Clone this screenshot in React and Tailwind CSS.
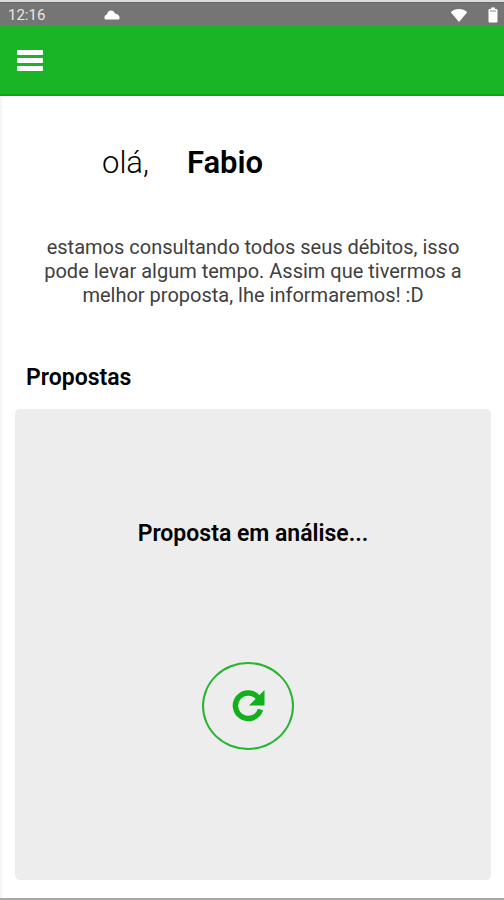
import { useState } from 'react'

function CloudIcon() {
    return (
        <svg width="16" height="10" viewBox="0 0 16 10" fill="#fff" aria-hidden="true">
            <path d="M1.500 9.500Q.4 9.300 .4 8C.4 6.300 1.200 5 2.900 4.600C3.500 2.200 5 .6 7 .6C8.800 .6 10.200 1.800 11 3.600C13.600 4 15.600 5.600 15.600 8Q15.600 9.500 14.200 9.500Z" />
        </svg>
    )
}

function WifiIcon() {
    return (
        <svg width="18" height="14" viewBox="0 0 18 14" fill="#fff" aria-hidden="true">
            <path d="M.8 4.200C5 -.2 13 -.2 17.200 4.200L9 14Z" />
        </svg>
    )
}

function BatteryIcon() {
    return (
        <svg width="10" height="16" viewBox="0 0 10 16" fill="#fff" aria-hidden="true">
            <path d="M3 .5h4v1.500h1.500a1 1 0 0 1 1 1V14.500a1 1 0 0 1-1 1h-7a1 1 0 0 1-1-1V3a1 1 0 0 1 1-1H3Z" />
            <path d="M2 3h6v2H2Z" fill="#c4c4c4" />
        </svg>
    )
}

function RefreshIcon() {
    return (
        <svg width="34" height="34" viewBox="0 0 34 34" aria-hidden="true">
            <path d="M29.500 20.500A12.800 12.800 0 1 1 27.500 9" fill="none" stroke="#12b01e" strokeWidth="5.500" />
            <path d="M33.500 1V16.500H18Z" fill="#12b01e" />
        </svg>
    )
}

export default function App() {
    const [menuOpen, setMenuOpen] = useState(false)

    return (
        <div className="flex min-h-screen flex-col border-t-2 border-b-2 border-t-[#dcdcdc] border-b-[#a8a8a8] bg-white font-['Roboto',sans-serif] text-black">
            <div className="flex h-6 items-center border-t border-[#686868] bg-[#757575] pr-[6px] pl-2 text-white">
                <span className="w-24 text-[15px] leading-6 text-[#e8e8e8]">12:16</span>
                <CloudIcon />
                <div className="ml-auto flex items-center gap-5">
                    <WifiIcon />
                    <BatteryIcon />
                </div>
            </div>

            <header className="flex h-[70px] items-center border-b-2 border-[#0ca60e] bg-[#1ab527] px-4">
                <button
                    type="button"
                    aria-label="Menu"
                    aria-expanded={menuOpen}
                    onClick={() => setMenuOpen(!menuOpen)}
                    className="flex cursor-pointer flex-col gap-[3px] px-px"
                >
                    <span className="h-[5px] w-[26px] rounded-[1px] bg-white" />
                    <span className="h-[5px] w-[26px] rounded-[1px] bg-white" />
                    <span className="h-[5px] w-[26px] rounded-[1px] bg-white" />
                </button>
            </header>

            <main className="flex flex-1 flex-col border-l-2 border-[#f5f5f5] pr-[13px] pb-[18px] pl-[13px]">
                <h1 className="mt-[49px] flex gap-[38px] pl-[87px] text-[31px] leading-9">
                    <span className="font-light">olá,</span>
                    <span className="font-semibold">Fabio</span>
                </h1>

                <p className="mt-[54px] px-6 text-center text-[20px] leading-6 text-[#404040]">
                    estamos consultando todos seus débitos, isso pode levar algum tempo. Assim que tivermos a melhor proposta, lhe informaremos! :D
                </p>

                <h2 className="mt-[57px] pl-[11px] text-[23px] leading-7 font-semibold">Propostas</h2>

                <section className="mt-[17px] flex flex-1 flex-col items-center rounded-[5px] bg-[#ededed] pt-[111px] pb-[130px]">
                    <p className="text-[23px] leading-7 font-semibold">Proposta em análise...</p>
                    <button
                        type="button"
                        aria-label="Atualizar"
                        className="mt-[114px] mr-[10px] flex h-[88px] w-[92px] cursor-pointer items-center justify-center rounded-[50%] border-2 border-[#27b532]"
                    >
                        <RefreshIcon />
                    </button>
                </section>
            </main>
        </div>
    )
}
